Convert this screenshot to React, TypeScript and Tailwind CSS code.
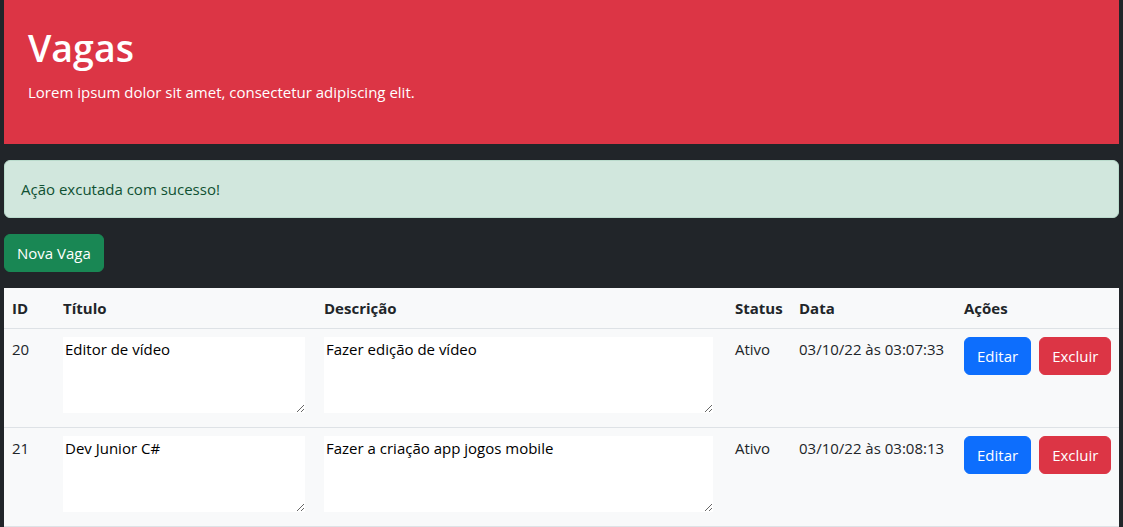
import React from 'react';

interface Vaga {
  id: number;
  titulo: string;
  descricao: string;
  status: string;
  data: string;
}

const vagas: Vaga[] = [
  { id: 20, titulo: 'Editor de vídeo', descricao: 'Fazer edição de vídeo', status: 'Ativo', data: '03/10/22 às 03:07:33' },
  { id: 21, titulo: 'Dev Junior C#', descricao: 'Fazer a criação app jogos mobile', status: 'Ativo', data: '03/10/22 às 03:08:13' },
];

const App: React.FC = () => {
  return (
    <div className="min-h-screen bg-[#212529] px-1 text-[15px] text-[#212529] font-['Open_Sans',sans-serif]">
      <header className="bg-[#dc3545] p-6 mb-4 text-white">
        <h1 className="text-[37.5px] leading-[48px] font-semibold mb-2">Vagas</h1>
        <p className="leading-6 mb-4">Lorem ipsum dolor sit amet, consectetur adipiscing elit.</p>
      </header>

      <div className="bg-[#d1e7dd] border border-[#badbcc] text-[#0f5132] rounded-md p-4 leading-6 mb-4">
        Ação excutada com sucesso!
      </div>

      <button className="bg-[#198754] border border-[#198754] text-white rounded-md px-3 py-[6px] leading-6 mb-4">
        Nova Vaga
      </button>

      <table className="w-full bg-[#f8f9fa] border-collapse table-fixed text-left">
        <colgroup>
          <col className="w-[51px]" />
          <col className="w-[261px]" />
          <col className="w-[411px]" />
          <col className="w-[64px]" />
          <col className="w-[165px]" />
          <col className="w-[163px]" />
        </colgroup>
        <thead>
          <tr className="border-b border-[#dee2e6]">
            <th className="p-2 leading-6 font-bold">ID</th>
            <th className="p-2 leading-6 font-bold">Título</th>
            <th className="p-2 leading-6 font-bold">Descrição</th>
            <th className="p-2 leading-6 font-bold">Status</th>
            <th className="p-2 leading-6 font-bold">Data</th>
            <th className="p-2 leading-6 font-bold">Ações</th>
          </tr>
        </thead>
        <tbody>
          {vagas.map((v) => (
            <tr key={v.id} className="border-b border-[#dee2e6] align-top">
              <td className="pt-2 pb-[14px] px-2 leading-6">{v.id}</td>
              <td className="pt-2 pb-[14px] px-2">
                <textarea
                  defaultValue={v.titulo}
                  className="block w-[242px] h-[76px] bg-white text-black px-[2px] py-[2px] leading-[21px] outline-none"
                />
              </td>
              <td className="pt-2 pb-[14px] px-2">
                <textarea
                  defaultValue={v.descricao}
                  className="block w-[389px] h-[76px] bg-white text-black px-[2px] py-[2px] leading-[21px] outline-none"
                />
              </td>
              <td className="pt-2 pb-[14px] px-2 leading-6">{v.status}</td>
              <td className="pt-2 pb-[14px] px-2 leading-6 whitespace-nowrap">{v.data}</td>
              <td className="pt-2 pb-[14px] px-2">
                <div className="flex gap-2">
                  <button className="bg-[#0d6efd] border border-[#0d6efd] text-white rounded-md px-3 py-[6px] leading-6">
                    Editar
                  </button>
                  <button className="bg-[#dc3545] border border-[#dc3545] text-white rounded-md px-3 py-[6px] leading-6">
                    Excluir
                  </button>
                </div>
              </td>
            </tr>
          ))}
        </tbody>
      </table>
    </div>
  );
};

export default App;
